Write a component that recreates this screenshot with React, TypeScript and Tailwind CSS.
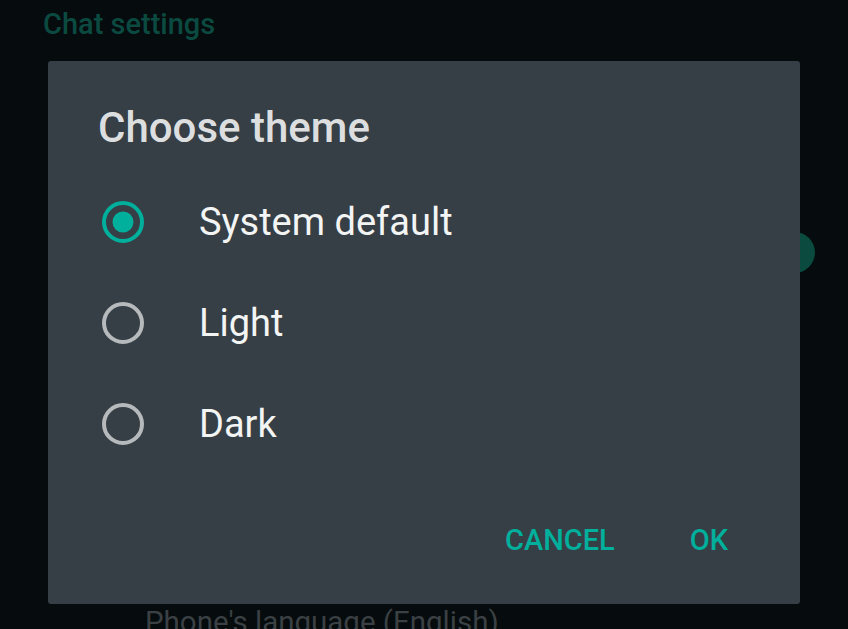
import type { ReactNode } from 'react';

const themes = ['System default', 'Light', 'Dark'];

function Radio({ checked }: { checked: boolean }) {
  return (
    <svg width="42" height="42" viewBox="0 0 42 42" className="shrink-0">
      <circle
        cx="21"
        cy="21"
        r="19"
        fill="none"
        stroke={checked ? '#00af9c' : '#b6babc'}
        strokeWidth="4"
      />
      {checked && <circle cx="21" cy="21" r="10.5" fill="#00af9c" />}
    </svg>
  );
}

function Option({ label, checked }: { label: string; checked: boolean }) {
  return (
    <div className="flex h-[101px] items-center pl-[54px]">
      <Radio checked={checked} />
      <span className="ml-[55px] text-[38px] leading-[38px] text-[#f3f4f4]">{label}</span>
    </div>
  );
}

function TextButton({ children }: { children: ReactNode }) {
  return (
    <button className="text-[29px] font-medium leading-[30px] text-[#00af9c]">{children}</button>
  );
}

export default function App() {
  return (
    <div
      className="relative h-[629px] w-[848px] overflow-hidden bg-[#060b0d]"
      style={{ fontFamily: 'Roboto, "Noto Sans", sans-serif' }}
    >
      {/* Settings page behind the scrim */}
      <div className="flex flex-col">
        <div className="pl-[43px] pt-[10px] text-[29px] font-medium leading-[29px] text-[#0b4a40]">
          Chat settings
        </div>
        <div className="mt-[193px] flex h-[41px] justify-end pr-[33px]">
          <div className="h-[41px] w-[41px] rounded-full bg-[#0a4a3f]" />
        </div>
        <div className="mt-[335px] pl-[145px] text-[29.5px] leading-[29px] text-[#3a4043]">
          Phone's language (English)
        </div>
      </div>

      {/* Dialog */}
      <div className="absolute left-[48px] top-[61px] flex h-[543px] w-[752px] flex-col rounded-[3px] bg-[#363f45]">
        <h2 className="pl-[50px] pt-[45.5px] text-[42px] font-medium leading-[42px] text-[#dcdedf]">
          Choose theme
        </h2>
        <div className="mt-[23px] flex flex-col">
          {themes.map((t, i) => (
            <Option key={t} label={t} checked={i === 0} />
          ))}
        </div>
        <div className="mt-[35px] flex h-[60px] items-center justify-end gap-[75px] pr-[72px]">
          <TextButton>CANCEL</TextButton>
          <TextButton>OK</TextButton>
        </div>
      </div>
    </div>
  );
}
